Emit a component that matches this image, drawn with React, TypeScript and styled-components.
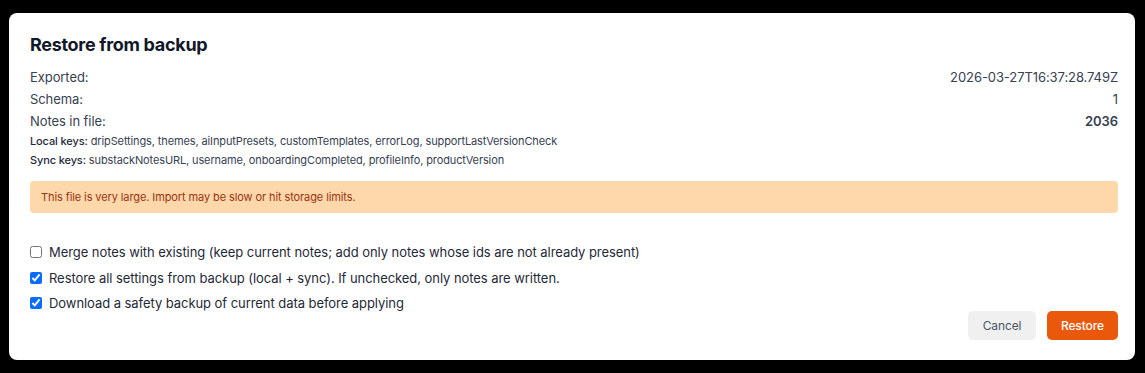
import React from "react";
import styled, { createGlobalStyle } from "styled-components";

const GlobalStyle = createGlobalStyle`
  html, body {
    margin: 0;
    padding: 0;
    background: #000;
  }
  body {
    font-family: Inter, "Noto Sans", "Liberation Sans", sans-serif;
    -webkit-font-smoothing: antialiased;
  }
`;

const Backdrop = styled.div`
  width: 1145px;
  height: 373px;
  box-sizing: border-box;
  padding: 13px 10px 13px 9px;
  background: #000;
`;

const Card = styled.div`
  box-sizing: border-box;
  height: 347px;
  background: #fff;
  border-radius: 8px;
  padding: 20px 17px 20px 21px;
  display: flex;
  flex-direction: column;
`;

const Title = styled.h2`
  margin: 0 0 9px;
  font-size: 18px;
  line-height: 24px;
  font-weight: 700;
  color: #111827;
  letter-spacing: -0.3px;
`;

const MetaRow = styled.div`
  display: flex;
  justify-content: space-between;
  align-items: center;
  height: 22px;
  font-size: 13px;
  color: #374151;
  letter-spacing: -0.08px;
`;

const MetaValue = styled.span<{ $strong?: boolean }>`
  font-weight: ${(p) => (p.$strong ? 600 : 400)};
`;

const KeyLine = styled.div`
  font-size: 11px;
  line-height: 19px;
  color: #374151;
  letter-spacing: -0.12px;
`;

const KeyLabel = styled.span`
  font-weight: 500;
  color: #1f2937;
`;

const Warning = styled.div`
  margin-top: 11px;
  height: 32px;
  display: flex;
  align-items: center;
  padding: 0 11px;
  background: #fed7aa;
  border-radius: 4px;
  font-size: 11px;
  letter-spacing: -0.1px;
  color: #9a3412;
`;

const Options = styled.div`
  margin-top: 31px;
  display: flex;
  flex-direction: column;
  gap: 9.5px;
`;

const OptionRow = styled.label`
  display: flex;
  align-items: center;
  gap: 7px;
  height: 16px;
  font-size: 13px;
  letter-spacing: -0.06px;
  color: #1f2937;
`;

const Check = styled.input`
  margin: 0;
  width: 12px;
  height: 12px;
  accent-color: #0a6cff;
`;

const Footer = styled.div`
  display: flex;
  justify-content: flex-end;
  gap: 11px;
`;

const Button = styled.button<{ $primary?: boolean }>`
  height: 29px;
  padding: 0 ${(p) => (p.$primary ? 14 : 14.5)}px;
  border: none;
  border-radius: 5px;
  font-family: inherit;
  font-size: 12px;
  letter-spacing: -0.1px;
  font-weight: ${(p) => (p.$primary ? 500 : 400)};
  background: ${(p) => (p.$primary ? "#ea580c" : "#f0f0f1")};
  color: ${(p) => (p.$primary ? "#fff" : "#4b5563")};
  cursor: pointer;
`;

const meta = [
  { label: "Exported:", value: "2026-03-27T16:37:28.749Z" },
  { label: "Schema:", value: "1" },
  { label: "Notes in file:", value: "2036", strong: true },
];

const options = [
  {
    label:
      "Merge notes with existing (keep current notes; add only notes whose ids are not already present)",
    checked: false,
  },
  {
    label: "Restore all settings from backup (local + sync). If unchecked, only notes are written.",
    checked: true,
  },
  { label: "Download a safety backup of current data before applying", checked: true },
];

export default function App() {
  return (
    <>
      <GlobalStyle />
      <Backdrop>
        <Card>
          <Title>Restore from backup</Title>
          {meta.map((m) => (
            <MetaRow key={m.label}>
              <span>{m.label}</span>
              <MetaValue $strong={m.strong}>{m.value}</MetaValue>
            </MetaRow>
          ))}
          <KeyLine>
            <KeyLabel>Local keys:</KeyLabel> dripSettings, themes, aiInputPresets,
            customTemplates, errorLog, supportLastVersionCheck
          </KeyLine>
          <KeyLine>
            <KeyLabel>Sync keys:</KeyLabel> substackNotesURL, username,
            onboardingCompleted, profileInfo, productVersion
          </KeyLine>
          <Warning>This file is very large. Import may be slow or hit storage limits.</Warning>
          <Options>
            {options.map((o) => (
              <OptionRow key={o.label}>
                <Check type="checkbox" defaultChecked={o.checked} />
                {o.label}
              </OptionRow>
            ))}
          </Options>
          <Footer>
            <Button>Cancel</Button>
            <Button $primary>Restore</Button>
          </Footer>
        </Card>
      </Backdrop>
    </>
  );
}
